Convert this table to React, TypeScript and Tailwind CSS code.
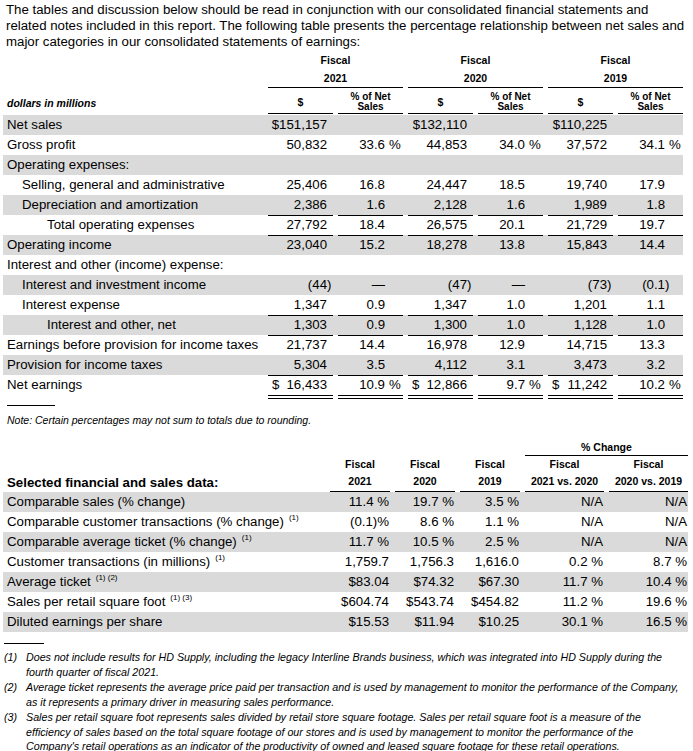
import React from 'react';

type Cell = [string, string?];

interface EarningsRow {
  label: string;
  indent?: number;
  cells?: Cell[];
  line?: 'single' | 'double';
}

const earningsRows: EarningsRow[] = [
  { label: 'Net sales', cells: [['$151,157'], [''], ['$132,110'], [''], ['$110,225'], ['']] },
  { label: 'Gross profit', cells: [['50,832'], ['33.6', '%'], ['44,853'], ['34.0', '%'], ['37,572'], ['34.1', '%']] },
  { label: 'Operating expenses:' },
  { label: 'Selling, general and administrative', indent: 1, cells: [['25,406'], ['16.8'], ['24,447'], ['18.5'], ['19,740'], ['17.9']] },
  { label: 'Depreciation and amortization', indent: 1, line: 'single', cells: [['2,386'], ['1.6'], ['2,128'], ['1.6'], ['1,989'], ['1.8']] },
  { label: 'Total operating expenses', indent: 2, line: 'single', cells: [['27,792'], ['18.4'], ['26,575'], ['20.1'], ['21,729'], ['19.7']] },
  { label: 'Operating income', cells: [['23,040'], ['15.2'], ['18,278'], ['13.8'], ['15,843'], ['14.4']] },
  { label: 'Interest and other (income) expense:' },
  { label: 'Interest and investment income', indent: 1, cells: [['(44', ')'], ['—'], ['(47', ')'], ['—'], ['(73', ')'], ['(0.1', ')']] },
  { label: 'Interest expense', indent: 1, line: 'single', cells: [['1,347'], ['0.9'], ['1,347'], ['1.0'], ['1,201'], ['1.1']] },
  { label: 'Interest and other, net', indent: 2, line: 'single', cells: [['1,303'], ['0.9'], ['1,300'], ['1.0'], ['1,128'], ['1.0']] },
  { label: 'Earnings before provision for income taxes', cells: [['21,737'], ['14.4'], ['16,978'], ['12.9'], ['14,715'], ['13.3']] },
  { label: 'Provision for income taxes', line: 'single', cells: [['5,304'], ['3.5'], ['4,112'], ['3.1'], ['3,473'], ['3.2']] },
  { label: 'Net earnings', line: 'double', cells: [['16,433'], ['10.9', '%'], ['12,866'], ['9.7', '%'], ['11,242'], ['10.2', '%']] },
];

interface SalesRow {
  label: string;
  notes?: string;
  values: string[];
}

const salesRows: SalesRow[] = [
  { label: 'Comparable sales (% change)', values: ['11.4 %', '19.7 %', '3.5 %', 'N/A', 'N/A'] },
  { label: 'Comparable customer transactions (% change)', notes: '(1)', values: ['(0.1)%', '8.6 %', '1.1 %', 'N/A', 'N/A'] },
  { label: 'Comparable average ticket (% change)', notes: '(1)', values: ['11.7 %', '10.5 %', '2.5 %', 'N/A', 'N/A'] },
  { label: 'Customer transactions (in millions)', notes: '(1)', values: ['1,759.7', '1,756.3', '1,616.0', '0.2 %', '8.7 %'] },
  { label: 'Average ticket', notes: '(1) (2)', values: ['$83.04', '$74.32', '$67.30', '11.7 %', '10.4 %'] },
  { label: 'Sales per retail square foot', notes: '(1) (3)', values: ['$604.74', '$543.74', '$454.82', '11.2 %', '19.6 %'] },
  { label: 'Diluted earnings per share', values: ['$15.53', '$11.94', '$10.25', '30.1 %', '16.5 %'] },
];

const EarningsCell: React.FC<{ cell?: Cell; pct: boolean; line?: 'single' | 'double' }> = ({ cell, pct, line }) => {
  const border =
    line === 'double'
      ? 'border-b-[4px] border-double border-black'
      : line === 'single'
      ? 'border-b border-black'
      : '';
  const dollar = line === 'double' && !pct;
  const [num, suf] = cell ?? [''];
  return (
    <div className={`flex items-center ${dollar ? 'justify-between pl-[4px]' : 'justify-end'} ${border}`}>
      {dollar && <span>$</span>}
      <div className="flex items-center">
        <span>{num}</span>
        {pct ? (
          <span className={`w-[18px] text-left ${suf === '%' ? 'pl-[4px]' : ''}`}>{suf}</span>
        ) : (
          <span className="w-[6px] text-left">{suf}</span>
        )}
      </div>
    </div>
  );
};

export default function App() {
  return (
    <div className="w-[693px] h-[751px] overflow-hidden bg-white text-black font-['Liberation_Sans',Arial,sans-serif]">
      <p className="pl-[6px] pt-[2px] text-[13.25px] leading-[16px] whitespace-nowrap">
        The tables and discussion below should be read in conjunction with our consolidated financial statements and
        <br />
        related notes included in this report. The following table presents the percentage relationship between net sales and
        <br />
        major categories in our consolidated statements of earnings:
      </p>

      {/* earnings table */}
      <div className="ml-[3px] mt-[2px] w-[680px]">
        <div className="grid grid-cols-[260px_repeat(6,65px)] gap-x-[5px] text-[10.5px] font-bold">
          <div className="h-[18px]" />
          {['2021', '2020', '2019'].map((y) => (
            <div key={y} className="col-span-2 h-[18px] flex items-center justify-center">Fiscal</div>
          ))}
          <div className="h-[18px]" />
          {['2021', '2020', '2019'].map((y) => (
            <div key={y} className="col-span-2 h-[18px] flex items-center justify-center border-b border-black">
              {y}
            </div>
          ))}
          <div className="h-[26px] flex items-end pb-[2px] pl-[4px] italic">dollars in millions</div>
          {['2021', '2020', '2019'].map((y) => (
            <React.Fragment key={y}>
              <div className="h-[26px] flex items-end justify-center pb-[2px] border-b border-black">$</div>
              <div className="h-[26px] flex flex-col items-center justify-end pb-[1px] text-[10px] leading-[10px] border-b border-black">
                <span>% of Net</span>
                <span>Sales</span>
              </div>
            </React.Fragment>
          ))}
        </div>

        <div className="mt-[1px] text-[13.25px]">
          {earningsRows.map((r, i) => (
            <div
              key={r.label}
              className={`grid grid-cols-[260px_repeat(6,65px)] gap-x-[5px] ${
                r.line === 'double' ? 'h-[23px]' : 'h-[20px]'
              } ${i % 2 === 0 ? 'bg-[#dadada]' : ''}`}
            >
              <div
                className={`flex items-center h-[20px] ${
                  r.indent === 2 ? 'pl-[44px]' : r.indent === 1 ? 'pl-[19px]' : 'pl-[4px]'
                }`}
              >
                {r.label}
              </div>
              {r.cells ? (
                r.cells.map((c, j) => (
                  <EarningsCell key={j} cell={c} pct={j % 2 === 1} line={r.line} />
                ))
              ) : (
                <div className="col-span-6" />
              )}
            </div>
          ))}
        </div>
      </div>

      <div className="ml-[7px] mt-[7px] w-[48px] border-t border-black" />
      <p className="pl-[7px] mt-[8px] text-[10.5px] italic leading-[12px]">
        Note: Certain percentages may not sum to totals due to rounding.
      </p>

      {/* selected data table */}
      <div className="ml-[3px] mt-[14px] w-[685px]">
        <div className="grid grid-cols-[322px_60px_60px_60px_79px_79px] gap-x-[5px] text-[10.5px] font-bold">
          <div className="col-span-4 h-[16px]" />
          <div className="col-span-2 h-[16px] flex items-center justify-center border-b border-black">% Change</div>
          <div className="h-[17px]" />
          {['', '', ''].map((_, k) => (
            <div key={k} className="h-[17px] flex items-center justify-center">Fiscal</div>
          ))}
          <div className="h-[17px] flex items-center justify-center">Fiscal</div>
          <div className="h-[17px] flex items-center justify-center">Fiscal</div>
          <div className="h-[19px] flex items-center pl-[4px] text-[13.25px]">Selected financial and sales data:</div>
          {['2021', '2020', '2019', '2021 vs. 2020', '2020 vs. 2019'].map((y) => (
            <div key={y} className="h-[19px] flex items-center justify-center border-b border-black">
              {y}
            </div>
          ))}
        </div>
        <div className="text-[13.25px]">
          {salesRows.map((r, i) => (
            <div
              key={r.label}
              className={`grid grid-cols-[322px_60px_60px_60px_79px_79px] gap-x-[5px] h-[20px] ${
                i % 2 === 0 ? 'bg-[#dadada]' : ''
              }`}
            >
              <div className="flex items-center pl-[4px] whitespace-nowrap">
                {r.label}
                {r.notes && <span className="ml-[5px] text-[8px] relative -top-[4px]">{r.notes}</span>}
              </div>
              {r.values.map((v, j) => (
                <div key={j} className="flex items-center justify-end pr-[1px] whitespace-nowrap">
                  {v}
                </div>
              ))}
            </div>
          ))}
        </div>
      </div>

      <div className="ml-[4px] mt-[11px] w-[40px] border-t border-black" />
      <div className="mt-[6px] pl-[4px] text-[10.7px] italic leading-[14.5px] flex flex-col gap-[1px] whitespace-nowrap">
        <div className="flex">
          <span className="w-[22px] shrink-0">(1)</span>
          <span>
            Does not include results for HD Supply, including the legacy Interline Brands business, which was integrated into HD Supply during the
            <br />
            fourth quarter of fiscal 2021.
          </span>
        </div>
        <div className="flex">
          <span className="w-[22px] shrink-0">(2)</span>
          <span>
            Average ticket represents the average price paid per transaction and is used by management to monitor the performance of the Company,
            <br />
            as it represents a primary driver in measuring sales performance.
          </span>
        </div>
        <div className="flex">
          <span className="w-[22px] shrink-0">(3)</span>
          <span>
            Sales per retail square foot represents sales divided by retail store square footage. Sales per retail square foot is a measure of the
            <br />
            efficiency of sales based on the total square footage of our stores and is used by management to monitor the performance of the
            <br />
            Company's retail operations as an indicator of the productivity of owned and leased square footage for these retail operations.
          </span>
        </div>
      </div>
    </div>
  );
}
